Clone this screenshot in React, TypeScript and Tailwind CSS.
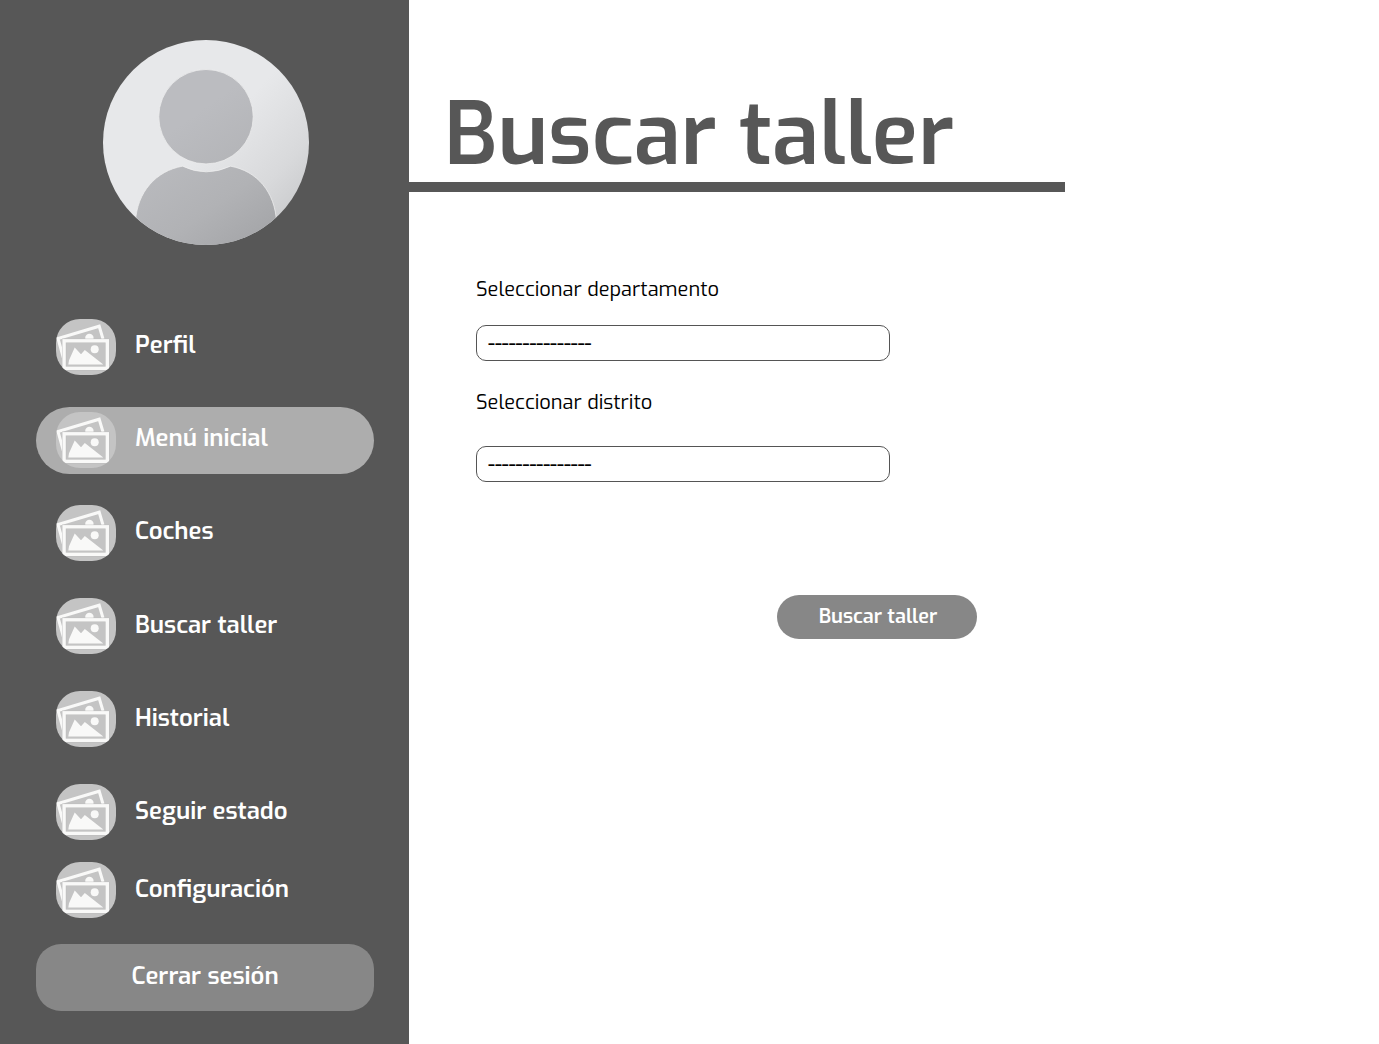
import type { ReactNode } from "react";

const FONT = "font-['Exo','Exo_2',Roboto,sans-serif]";

function Avatar() {
  return (
    <svg className="ml-[103px] mt-10 block h-[205px] w-[206px] shrink-0" viewBox="103 40 206 205" aria-label="Avatar">
      <defs>
        <linearGradient id="bg" gradientUnits="userSpaceOnUse" x1="140" y1="80" x2="290" y2="220">
          <stop offset="0.45" stopColor="#e7e8ea" />
          <stop offset="0.8" stopColor="#d8d9db" />
          <stop offset="1" stopColor="#cacbcd" />
        </linearGradient>
        <linearGradient id="fg" gradientUnits="userSpaceOnUse" x1="170" y1="90" x2="270" y2="230">
          <stop offset="0.2" stopColor="#bbbcc0" />
          <stop offset="0.7" stopColor="#b1b2b5" />
          <stop offset="1" stopColor="#a5a6a9" />
        </linearGradient>
        <clipPath id="round"><ellipse cx="206" cy="142.5" rx="103" ry="102.5" /></clipPath>
      </defs>
      <g clipPath="url(#round)">
        <rect x="103" y="40" width="206" height="205" fill="url(#bg)" />
        <g fill="url(#fg)" stroke="#f0f0f1" strokeWidth="0.7">
          <circle cx="206" cy="116.7" r="47.2" />
          <path d="M135.5 250V222C137 192 156 171 182.5 166.2Q206 177.5 230.5 166.2C257 171 275 192 276.5 222V250Z" />
        </g>
      </g>
    </svg>
  );
}

function Pictures() {
  return (
    <svg className="block h-14 w-[60px] shrink-0 rounded-[24px] bg-[#c4c4c4]" viewBox="0 0 60 56" fill="none">
      <path d="M8 41L2 19.5L43.2 7.2L47 20" stroke="#f9f9f8" strokeWidth="3" />
      <circle cx="33.4" cy="18.9" r="4.2" fill="#f9f9f8" />
      <rect x="8.1" y="21.8" width="43.2" height="27.8" fill="#c4c4c4" />
      <rect x="8.1" y="21.8" width="43.2" height="27.5" stroke="#bbbbbb" strokeWidth="4.2" />
      <rect x="8.1" y="21.8" width="43.2" height="27.5" stroke="#f9f9f8" strokeWidth="3.4" />
      <path d="M12.3 45.5L13 41.2L18.7 28.4L25 35.3L28.8 31L47.3 45.5Z" fill="#f9f9f8" />
      <circle cx="38.7" cy="30.3" r="4" fill="#f9f9f8" />
    </svg>
  );
}

function NavItem({ children, className, textTop = "mt-2" }: { children: ReactNode; className: string; textTop?: string }) {
  return (
    <a className={`ml-9 flex w-[338px] shrink-0 items-start pl-5 ${className}`}>
      <Pictures />
      <span className={`ml-[19px] text-2xl leading-9 font-semibold text-white ${textTop}`}>{children}</span>
    </a>
  );
}

function Field({ label, className }: { label: string; className: string }) {
  return (
    <label className={`flex w-[414px] flex-col text-black ${className}`}>
      <span className="text-[20px] leading-6">{label}</span>
      <span className="flex h-9 items-center rounded-[10px] border border-[#555] pt-0.5 pl-[11px] text-[20px] leading-6 font-medium">---------------</span>
    </label>
  );
}

export default function App() {
  return (
    <div className={`flex h-[1044px] w-[1379px] overflow-hidden bg-white ${FONT}`}>
      <aside className="flex w-[409px] shrink-0 flex-col bg-[#575757]">
        <Avatar />
        <nav className="mt-[74px] flex flex-col">
          <NavItem className="h-14">Perfil</NavItem>
          <NavItem className="mt-8 h-[67px] rounded-full bg-[#adadad] pt-[5px]">Menú inicial</NavItem>
          <NavItem className="mt-[31px] h-14">Coches</NavItem>
          <NavItem className="mt-[37px] h-14" textTop="mt-[9px]">Buscar taller</NavItem>
          <NavItem className="mt-[37px] h-14" textTop="mt-[9px]">Historial</NavItem>
          <NavItem className="mt-[37px] h-14" textTop="mt-[9px]">Seguir estado</NavItem>
          <NavItem className="mt-[22px] h-14" textTop="mt-[9px]">Configuración</NavItem>
        </nav>
        <button className="mt-[26px] ml-9 h-[67px] w-[338px] rounded-[25px] bg-[#878787] pb-[3px] text-2xl font-semibold text-white">Cerrar sesión</button>
      </aside>
      <main className="flex grow flex-col">
        <h1 className="mt-[83px] h-[99px] pl-[35px] text-[86px] leading-[104px] font-semibold whitespace-nowrap text-[#575757]">Buscar taller</h1>
        <div className="h-2.5 w-[656px] bg-[#575757]" />
        <form className="flex flex-col pl-[67px]">
          <Field label="Seleccionar departamento" className="mt-[86px] gap-[23px]" />
          <Field label="Seleccionar distrito" className="mt-[30px] gap-[31px]" />
          <button type="button" className="mt-[113px] ml-[301px] h-11 w-[200px] rounded-full bg-[#878787] pl-0.5 text-[20px] font-semibold text-white">Buscar taller</button>
        </form>
      </main>
    </div>
  );
}
